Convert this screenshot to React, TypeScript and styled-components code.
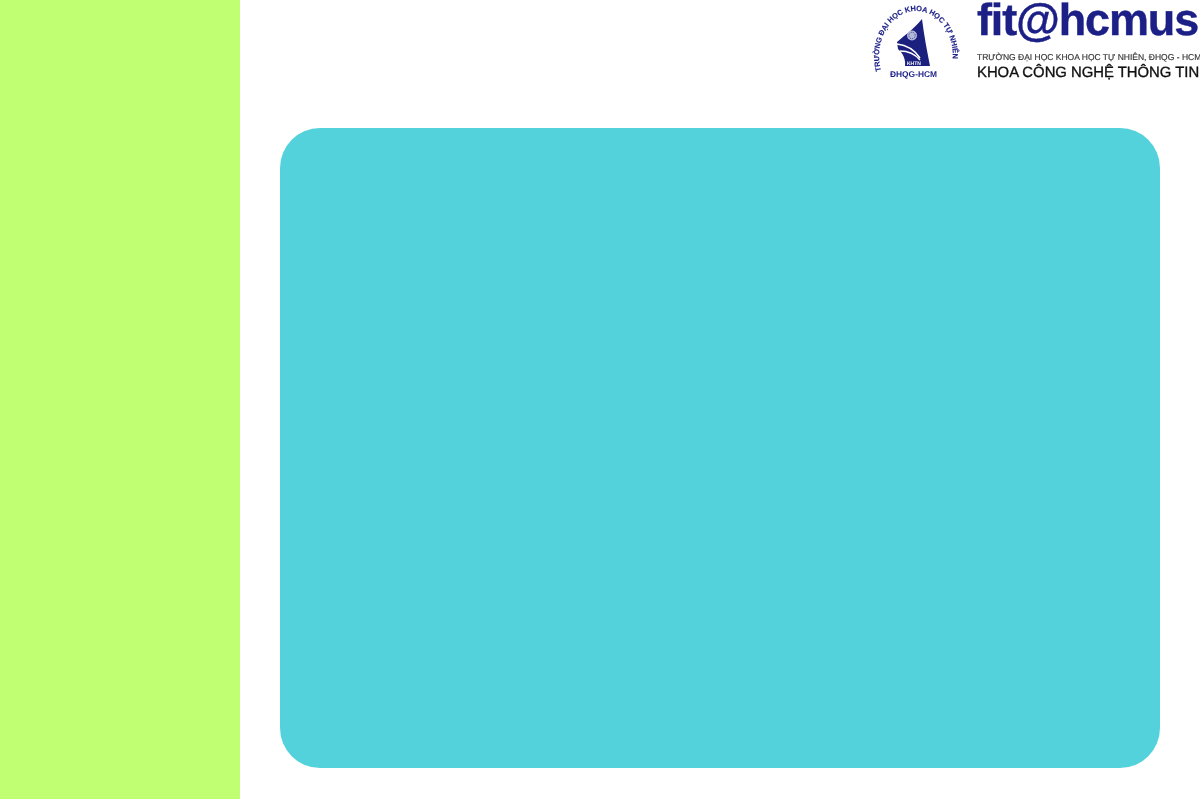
import React from "react";
import styled, { createGlobalStyle } from "styled-components";

const Global = createGlobalStyle`
  html, body { margin: 0; padding: 0; background: #ffffff; }
  body { font-family: "Liberation Sans", Arial, sans-serif; overflow: hidden; }
`;

const Page = styled.div`
  display: flex;
  width: 1200px;
  height: 800px;
  overflow: hidden;
`;

const Sidebar = styled.aside`
  flex: 0 0 240px;
  height: 799px;
  background: #c1ff72;
`;

const Main = styled.main`
  flex: 1;
  display: flex;
  flex-direction: column;
  min-width: 0;
`;

const Header = styled.header`
  flex: 0 0 128px;
  display: flex;
  justify-content: flex-end;
  align-items: flex-start;
`;

const Brand = styled.div`
  display: flex;
  align-items: flex-start;
  gap: 15px;
  filter: blur(0.35px);
  text-rendering: geometricPrecision;
`;

const Seal = styled.svg`
  display: block;
  width: 92px;
  height: 80px;
  margin-top: 1px;
`;

const Wordmark = styled.div`
  display: flex;
  flex-direction: column;
  width: 223px;
  white-space: nowrap;
  overflow: hidden;
`;

const FitName = styled.div`
  font-size: 45px;
  line-height: 39px;
  height: 49px;
  font-weight: 700;
  color: #1b1f86;
  letter-spacing: -1.15px;
  -webkit-text-stroke: 0.4px #1b1f86;
`;

const School = styled.div`
  font-size: 8.5px;
  line-height: 11px;
  color: #333333;
  -webkit-text-stroke: 0.15px #333333;
  margin-top: 3px;
`;

const Faculty = styled.div`
  font-size: 14.85px;
  line-height: 18px;
  color: #111111;
  -webkit-text-stroke: 0.35px #111111;
  margin-top: 1px;
`;

const Panel = styled.section`
  width: 880px;
  height: 640px;
  margin-left: 40px;
  background: #54d2db;
  border-radius: 40px;
`;

export default function App() {
  return (
    <Page>
      <Global />
      <Sidebar />
      <Main>
        <Header>
          <Brand>
            <Seal viewBox="0 0 92 80" aria-label="KHTN">
              <defs>
                <path id="sealArc" d="M11 70 C 3 38, 22 10, 46 10 C 70 10, 89 38, 81 70" />
              </defs>
              <text fontFamily="'Liberation Sans', Arial, sans-serif" fontSize="7.4" fontWeight="700" fill="#1b1f86" stroke="#1b1f86" strokeWidth="0.15">
                <textPath href="#sealArc" startOffset="0">
                  TRƯỜNG ĐẠI HỌC KHOA HỌC TỰ NHIÊN
                </textPath>
              </text>
              <path d="M52 18 C54 34 57 50 60 65 L35 65 C36 59 33 52 28 48 L27 41 C35 34 44 28 52 18 Z" fill="#1b1f7e" />
              <path d="M27 43 C36 44 44 48 50 57 M30 50 C38 50 45 53 50 59" stroke="#ffffff" strokeWidth="1.4" fill="none" />
              <circle cx="42" cy="34.5" r="5" fill="#b4b9d8" />
              <circle cx="42" cy="34.5" r="3.2" fill="none" stroke="#1b1f7e" strokeWidth="0.8" strokeDasharray="1 1" />
              <text x="37" y="63.5" fontFamily="'Liberation Sans', Arial, sans-serif" fontSize="5" fontWeight="700" fill="#ffffff">KHTN</text>
              <text x="20" y="76" fontFamily="'Liberation Sans', Arial, sans-serif" fontSize="8.4" fontWeight="700" fill="#1b1f86">ĐHQG-HCM</text>
            </Seal>
            <Wordmark>
              <FitName>fit@hcmus</FitName>
              <School>TRƯỜNG ĐẠI HỌC KHOA HỌC TỰ NHIÊN, ĐHQG - HCM</School>
              <Faculty>KHOA CÔNG NGHỆ THÔNG TIN</Faculty>
            </Wordmark>
          </Brand>
        </Header>
        <Panel />
      </Main>
    </Page>
  );
}
